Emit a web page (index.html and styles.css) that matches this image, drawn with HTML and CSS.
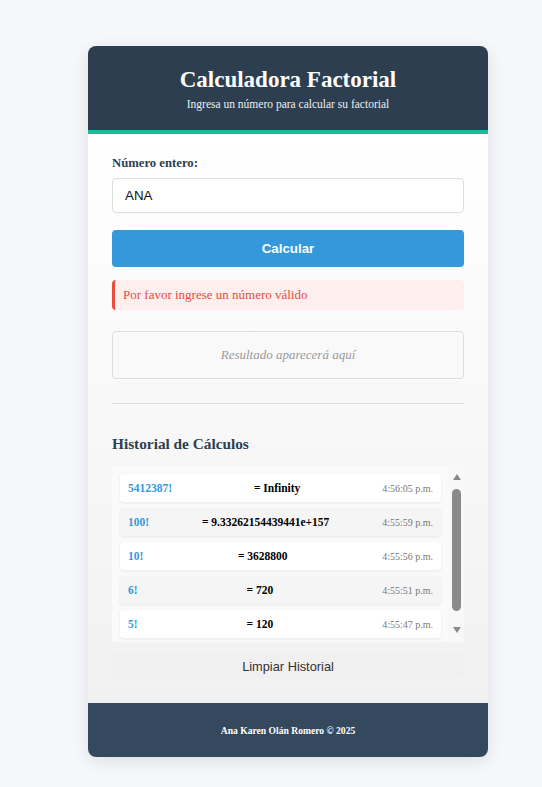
FILE: index.html
```html
<!DOCTYPE html>
<html lang="es">
<head>
<meta charset="utf-8">
<title>Calculadora Factorial</title>
<link rel="stylesheet" href="styles.css">
</head>
<body>
<div class="card">
  <header class="header">
    <h1 class="title">Calculadora Factorial</h1>
    <p class="subtitle">Ingresa un número para calcular su factorial</p>
  </header>
  <main class="content">
    <label class="label" for="num">Número entero:</label>
    <input class="input" id="num" type="text" value="ANA">
    <button class="btn-primary">Calcular</button>
    <div class="error">Por favor ingrese un número válido</div>
    <div class="result">Resultado aparecerá aquí</div>
    <hr class="divider">
    <h2 class="hist-title">Historial de Cálculos</h2>
    <div class="hist-box">
      <div class="hist-list">
        <div class="item"><span class="n">5412387!</span><span class="r">= Infinity</span><span class="t">4:56:05 p.m.</span></div>
        <div class="item alt"><span class="n">100!</span><span class="r">= 9.33262154439441e+157</span><span class="t">4:55:59 p.m.</span></div>
        <div class="item"><span class="n">10!</span><span class="r">= 3628800</span><span class="t">4:55:56 p.m.</span></div>
        <div class="item alt"><span class="n">6!</span><span class="r">= 720</span><span class="t">4:55:51 p.m.</span></div>
        <div class="item"><span class="n">5!</span><span class="r">= 120</span><span class="t">4:55:47 p.m.</span></div>
      </div>
      <div class="scrollbar" aria-hidden="true">
        <span class="arrow-up"></span>
        <span class="thumb"></span>
        <span class="arrow-down"></span>
      </div>
    </div>
    <button class="btn-clear">Limpiar Historial</button>
  </main>
  <footer class="footer">Ana Karen Olán Romero © 2025</footer>
</div>
</body>
</html>
```
FILE: styles.css
```css
html, body {
  margin: 0;
  padding: 0;
}
body {
  background: #f5f7fa;
  font-family: "Liberation Serif", "Times New Roman", serif;
  padding: 46px 0 30px 88px;
}
.card {
  width: 400px;
  border-radius: 8px;
  overflow: hidden;
  box-shadow: 0 4px 16px rgba(0, 0, 0, 0.1);
  background: #fff;
}
.header {
  background: #2c3e50;
  color: #fff;
  text-align: center;
  padding: 20px 16px 19px;
  border-bottom: 4px solid #1abc9c;
}
.title {
  margin: 0;
  font-size: 23px;
  line-height: 28px;
  font-weight: bold;
}
.subtitle {
  margin: 3px 0 0;
  font-size: 11.5px;
  line-height: 14px;
  color: #ecf0f1;
}
.content {
  padding: 21px 24px 25px;
  background: linear-gradient(to bottom, #ffffff, #f1f1f1);
  display: flex;
  flex-direction: column;
}
.label {
  display: block;
  font-size: 12.7px;
  line-height: 16px;
  font-weight: bold;
  color: #2c3e50;
  margin-bottom: 7px;
}
.input {
  box-sizing: border-box;
  height: 35px;
  width: 100%;
  border: 1px solid #ddd;
  border-radius: 4px;
  padding: 0 12px;
  font-family: "Liberation Sans", Arial, sans-serif;
  font-size: 13.333px;
  color: #111;
  background: #fff;
  margin: 0 0 17px;
}
.btn-primary {
  height: 37px;
  width: 100%;
  border: none;
  border-radius: 4px;
  background: #3498db;
  color: #fff;
  font-family: "Liberation Sans", Arial, sans-serif;
  font-size: 13.333px;
  font-weight: bold;
  margin: 0 0 13px;
}
.error {
  box-sizing: border-box;
  height: 30px;
  display: flex;
  align-items: center;
  padding-left: 8px;
  background: #ffeeee;
  border-left: 3px solid #e74c3c;
  border-radius: 4px;
  color: #e74c3c;
  font-size: 13px;
  margin-bottom: 21px;
}
.result {
  box-sizing: border-box;
  height: 48px;
  display: flex;
  align-items: center;
  justify-content: center;
  border: 1px solid #ddd;
  border-radius: 4px;
  background: #f9f9f9;
  color: #999;
  font-style: italic;
  font-size: 13px;
  margin-bottom: 24px;
}
.divider {
  width: 100%;
  margin: 0;
  border: none;
  border-top: 1px solid #ddd;
}
.hist-title {
  margin: 31px 0 13px;
  font-size: 15.3px;
  line-height: 18px;
  font-weight: bold;
  color: #2c3e50;
}
.hist-box {
  height: 176px;
  display: flex;
  background: #fafafa;
  margin-bottom: 12px;
  overflow: hidden;
}
.hist-list {
  flex: 1;
  box-sizing: border-box;
  padding: 8px 8px 0;
  display: flex;
  flex-direction: column;
  gap: 6px;
}
.scrollbar {
  width: 15px;
  flex: 0 0 15px;
  background: #f8f8f8;
  display: flex;
  flex-direction: column;
  align-items: center;
}
.arrow-up {
  width: 0;
  height: 0;
  border-left: 4.5px solid transparent;
  border-right: 4.5px solid transparent;
  border-bottom: 6px solid #8a8a8a;
  margin-top: 8px;
}
.thumb {
  width: 9px;
  height: 122px;
  border-radius: 5px;
  background: #8a8a8a;
  margin-top: 9px;
}
.arrow-down {
  width: 0;
  height: 0;
  border-left: 4.5px solid transparent;
  border-right: 4.5px solid transparent;
  border-top: 6px solid #8a8a8a;
  margin-top: auto;
  margin-bottom: 9px;
}
.item {
  flex: 0 0 28px;
  box-sizing: border-box;
  display: flex;
  align-items: center;
  justify-content: space-between;
  padding: 0 8px;
  background: #fff;
  border-radius: 4px;
  box-shadow: 0 1px 3px rgba(0, 0, 0, 0.08);
  font-size: 11.5px;
}
.item.alt {
  background: #f5f5f5;
}
.n {
  color: #3498db;
  font-weight: bold;
}
.r {
  color: #000;
  font-weight: bold;
}
.t {
  color: #777;
  font-size: 10px;
}
.btn-clear {
  height: 24px;
  width: 100%;
  border: none;
  border-radius: 4px;
  background: #f0f0f0;
  color: #333;
  font-family: "Liberation Sans", Arial, sans-serif;
  font-size: 12.8px;
}
.footer {
  height: 54px;
  background: #34495e;
  color: #fff;
  font-size: 9.6px;
  font-weight: bold;
  display: flex;
  align-items: center;
  justify-content: center;
}
```
